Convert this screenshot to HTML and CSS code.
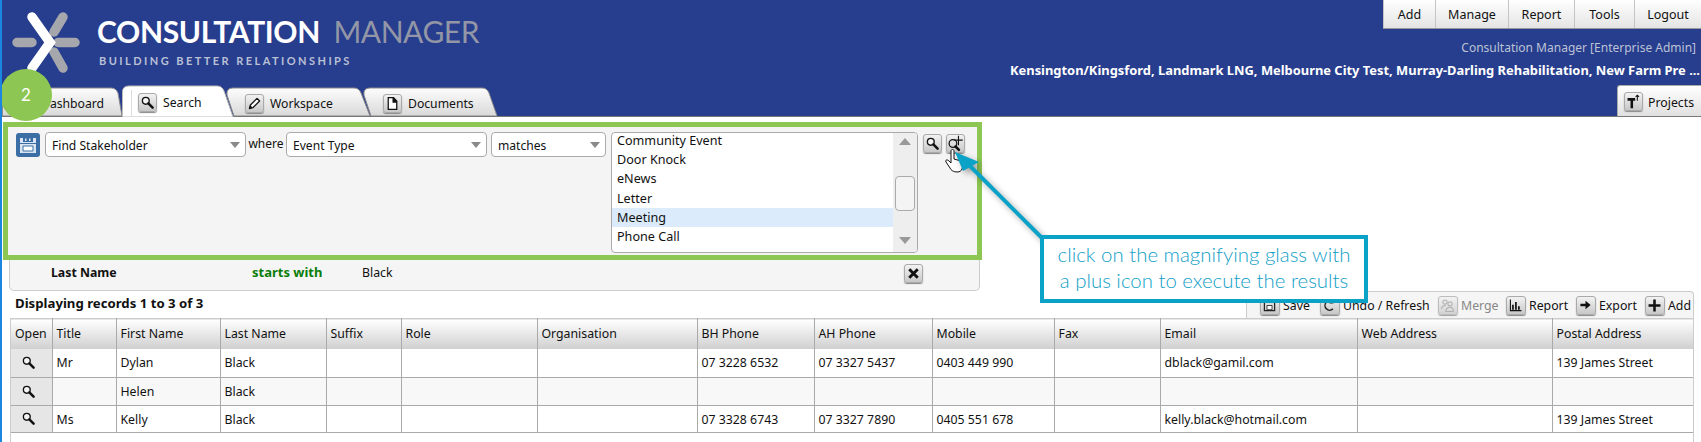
FILE: index.html
```html
<!DOCTYPE html>
<html lang="en">
<head>
<meta charset="utf-8">
<title>Consultation Manager</title>
<link rel="stylesheet" href="styles.css">
</head>
<body>
<svg class="defs" width="0" height="0" aria-hidden="true">
  <defs>
    <linearGradient id="tab-fill" x1="0" y1="0" x2="0" y2="1"><stop offset="0" stop-color="#fdfdfd"/><stop offset="1" stop-color="#d9d9d9"/></linearGradient>
  </defs>
  <symbol id="i-search" viewBox="0 0 20 20"><circle cx="8" cy="8" r="4" fill="#f4f4f4" stroke="#111" stroke-width="1.6"/><path d="M11 11l5 5" stroke="#111" stroke-width="3" stroke-linecap="round"/></symbol>
  <symbol id="i-plus" viewBox="0 0 20 20"><circle cx="7" cy="10" r="4.500" fill="none" stroke="#111" stroke-width="1.500"/><path d="M10 13.500l4 4" stroke="#111" stroke-width="3" stroke-linecap="round"/><path d="M13.500 1v11M8.500 6h10" stroke="#111" stroke-width="1.300"/></symbol>
  <symbol id="i-pencil" viewBox="0 0 20 20"><path d="M4 16l1-4 8-8 3 3-8 8z" fill="#fff" stroke="#111" stroke-width="1.500" stroke-linejoin="round"/><path d="M4 16l1-4 3 3z" fill="#111"/></symbol>
  <symbol id="i-doc" viewBox="0 0 20 20"><path d="M5 3h6l4 4v10H5z" fill="#fff" stroke="#111" stroke-width="1.500"/><path d="M10 3h2l3 4v2H10z" fill="#111"/></symbol>
  <symbol id="i-project" viewBox="0 0 20 20"><path d="M3 6h9v3H9.500v9H6.500V9H3z" fill="#111"/><path d="M14.500 9V2.500M12.500 4.500l2-2 2 2" stroke="#111" stroke-width="1.200" fill="none"/></symbol>
  <symbol id="i-save" viewBox="0 0 20 20"><path d="M4 4h12v12H4z" fill="#ddd" stroke="#222" stroke-width="1.500"/><path d="M7 10h6v5H7z" fill="#fff" stroke="#222"/></symbol>
  <symbol id="i-undo" viewBox="0 0 20 20"><path d="M14 6a5.500 5.500 0 1 0 0 8" fill="none" stroke="#222" stroke-width="1.800"/><path d="M14 3v4h-4" fill="none" stroke="#222" stroke-width="1.200"/></symbol>
  <symbol id="i-merge" viewBox="0 0 20 20"><circle cx="7" cy="6" r="2.500" fill="none" stroke="#999" stroke-width="1.200"/><circle cx="13" cy="8" r="2.500" fill="none" stroke="#999" stroke-width="1.200"/><path d="M3 14c0-3 3-4 5-4M8 17c0-3 2-5 5-5s4 2 4 5z" fill="none" stroke="#999" stroke-width="1.200"/></symbol>
  <symbol id="i-report" viewBox="0 0 20 20"><path d="M4 3v13h13" fill="none" stroke="#111" stroke-width="1.300"/><path d="M6 9h2v6H6zM9.500 6h2v9h-2zM13 11h2v4h-2z" fill="#111"/></symbol>
  <symbol id="i-export" viewBox="0 0 20 20"><path d="M4 8h6V4.500l6 5-6 5V11H4z" fill="#111"/></symbol>
  <symbol id="i-add" viewBox="0 0 20 20"><path d="M8.500 3h3v5.500H17v3h-5.500V17h-3v-5.500H3v-3h5.500z" fill="#111"/></symbol>
  <symbol id="i-close" viewBox="0 0 20 20"><path d="M5 5l10 10M15 5L5 15" stroke="#111" stroke-width="3.400"/></symbol>
  <symbol id="i-floppy" viewBox="0 0 24 24"><rect width="24" height="24" rx="3" fill="#3b6ea5"/><path d="M4 5h16v15H4z" fill="#d8e4f0"/><path d="M7 5h10v4H7z" fill="#3b6ea5"/><path d="M9 5.500h1.500V8H9zM13 5.500h1.500V8H13z" fill="#d8e4f0"/><path d="M4 10.500h16" stroke="#3b6ea5"/><path d="M7 13h10v5H7z" fill="#fff" stroke="#3b6ea5"/></symbol>
</svg>

<header class="top">
  <div class="brand-col">
    <div class="brand">
      <svg class="logo" viewBox="0 0 84 84" aria-hidden="true">
        <g fill="none" stroke-linecap="round" stroke-width="9.500">
          <path class="logo-grey" d="M17 42.500h15M58 42.500h17M63 17L54 32M54 52l9 16"/>
          <path class="logo-white" d="M32 17l18 25.500L32 68"/>
        </g>
      </svg>
      <div class="brand-text">
        <div class="brand-name"><b>CONSULTATION</b> <span>MANAGER</span></div>
        <div class="brand-tag">BUILDING BETTER RELATIONSHIPS</div>
      </div>
    </div>
    <nav class="tabs">
      <a class="tab tab-dash">
        <svg class="tab-bg" width="120" height="29" viewBox="0 0 120 29"><path class="tab-shape" d="M.5 29V7Q.5 1 7 1H109Q114 1 116 6L120 29z"/></svg>
        <span class="tab-label">Dashboard</span>
      </a>
      <a class="tab tab-search">
        <svg class="tab-bg" width="112" height="32" viewBox="0 0 112 32"><path class="tab-shape tab-active" d="M.5 32V7Q.5 1 7 1H95Q100 1 102 6L111 32z"/><path class="tab-rule" d="M9.500 5V32"/></svg>
        <span class="icon-btn"><svg><use href="#i-search"/></svg></span>
        <span class="tab-label">Search</span>
      </a>
      <a class="tab tab-work">
        <svg class="tab-bg" width="146" height="29" viewBox="0 0 146 29"><path class="tab-shape" d="M9 29L2 8Q1 1 8 1H129Q134 1 136 6L145 29z"/></svg>
        <span class="icon-btn"><svg><use href="#i-pencil"/></svg></span>
        <span class="tab-label">Workspace</span>
      </a>
      <a class="tab tab-docs">
        <svg class="tab-bg" width="136" height="29" viewBox="0 0 136 29"><path class="tab-shape" d="M9 29L2 8Q1 1 8 1H120Q125 1 127 6L135 29z"/></svg>
        <span class="icon-btn"><svg><use href="#i-doc"/></svg></span>
        <span class="tab-label">Documents</span>
      </a>
    </nav>
  </div>
  <div class="user-col">
    <nav class="menu">
      <a class="menu-item">Add</a>
      <a class="menu-item">Manage</a>
      <a class="menu-item">Report</a>
      <a class="menu-item">Tools</a>
      <a class="menu-item">Logout</a>
    </nav>
    <div class="role">Consultation Manager [Enterprise Admin]</div>
    <div class="projects-list">Kensington/Kingsford, Landmark LNG, Melbourne City Test, Murray-Darling Rehabilitation, New Farm Pre ...</div>
    <a class="projects-btn"><span class="icon-btn"><svg><use href="#i-project"/></svg></span><span class="projects-label">Projects</span></a>
  </div>
</header>

<main class="content">
  <section class="query">
    <div class="query-inner">
      <svg class="floppy"><use href="#i-floppy"/></svg>
      <div class="select sel-find">Find Stakeholder</div>
      <span class="where">where</span>
      <div class="select sel-field">Event Type</div>
      <div class="select sel-op">matches</div>
      <div class="listbox">
        <ul class="options">
          <li>Community Event</li>
          <li>Door Knock</li>
          <li>eNews</li>
          <li>Letter</li>
          <li class="selected">Meeting</li>
          <li>Phone Call</li>
        </ul>
        <div class="scrollbar">
          <i class="arrow-up"></i>
          <i class="thumb"></i>
          <i class="arrow-down"></i>
        </div>
      </div>
      <span class="icon-btn"><svg><use href="#i-search"/></svg></span>
      <span class="icon-btn"><svg><use href="#i-plus"/></svg></span>
    </div>
  </section>

  <section class="criteria">
    <b class="crit-field">Last Name</b>
    <b class="crit-op">starts with</b>
    <span class="crit-value">Black</span>
    <span class="icon-btn crit-close"><svg><use href="#i-close"/></svg></span>
  </section>

  <div class="results-bar">
    <b class="records">Displaying records 1 to 3 of 3</b>
    <div class="toolbar">
      <a class="tool tool-save"><span class="icon-btn"><svg><use href="#i-save"/></svg></span>Save</a>
      <a class="tool tool-undo"><span class="icon-btn"><svg><use href="#i-undo"/></svg></span>Undo / Refresh</a>
      <a class="tool tool-merge is-disabled"><span class="icon-btn"><svg><use href="#i-merge"/></svg></span>Merge</a>
      <a class="tool tool-report"><span class="icon-btn"><svg><use href="#i-report"/></svg></span>Report</a>
      <a class="tool tool-export"><span class="icon-btn"><svg><use href="#i-export"/></svg></span>Export</a>
      <a class="tool tool-add"><span class="icon-btn"><svg><use href="#i-add"/></svg></span>Add</a>
    </div>
  </div>

  <div class="grid-wrap">
    <table class="grid">
      <colgroup>
        <col class="c-open"><col class="c-title"><col class="c-first"><col class="c-last"><col class="c-suffix"><col class="c-role"><col class="c-org"><col class="c-bh"><col class="c-ah"><col class="c-mobile"><col class="c-fax"><col class="c-email"><col class="c-web"><col class="c-postal">
      </colgroup>
      <thead>
        <tr><th>Open</th><th>Title</th><th>First Name</th><th>Last Name</th><th>Suffix</th><th>Role</th><th>Organisation</th><th>BH Phone</th><th>AH Phone</th><th>Mobile</th><th>Fax</th><th>Email</th><th>Web Address</th><th>Postal Address</th></tr>
      </thead>
      <tbody>
        <tr class="row-first"><td class="open"><svg><use href="#i-search"/></svg></td><td>Mr</td><td>Dylan</td><td>Black</td><td></td><td></td><td></td><td>07 3228 6532</td><td>07 3327 5437</td><td>0403 449 990</td><td></td><td>dblack@gamil.com</td><td></td><td>139 James Street</td></tr>
        <tr class="alt"><td class="open"><svg><use href="#i-search"/></svg></td><td></td><td>Helen</td><td>Black</td><td></td><td></td><td></td><td></td><td></td><td></td><td></td><td></td><td></td><td></td></tr>
        <tr class="row-last"><td class="open"><svg><use href="#i-search"/></svg></td><td>Ms</td><td>Kelly</td><td>Black</td><td></td><td></td><td></td><td>07 3328 6743</td><td>07 3327 7890</td><td>0405 551 678</td><td></td><td>kelly.black@hotmail.com</td><td></td><td>139 James Street</td></tr>
      </tbody>
    </table>
  </div>
</main>

<div class="step-badge">2</div>

<svg class="pointer" width="110" height="100" viewBox="0 0 110 100" aria-hidden="true">
  <path class="hand" d="M11 6c0-2 3-2 3 0v8l7 2c2 1 2 3 2 5l-1 3c-1 2-2 3-5 3-4 0-6-2-7-4l-4-6c-1-2 1-3 3-1l2 2z"/>
  <g class="arrow-shadow">
    <path class="arrow-head" d="M15 7l24 10-16 9z"/>
    <path class="arrow-line" d="M28 19l76 76"/>
  </g>
</svg>
<aside class="callout">click on the magnifying glass with<br>a plus icon to execute the results</aside>
</body>
</html>
```

FILE: styles.css
```css
* { box-sizing: border-box; }
html, body { margin: 0; height: 442px; overflow: hidden; }
body {
  position: relative;
  background: #fff;
  border-left: 2px solid #1a86e0;
  font: 12.3px "Noto Sans", "Liberation Sans", sans-serif;
  color: #111;
}
.defs { position: absolute; }
b { font-weight: 700; }

/* header */
.top {
  display: flex;
  justify-content: space-between;
  height: 117px;
  background: #273d8d;
  border-bottom: 1px solid #777;
}
.brand-col { display: flex; flex-direction: column; }
.brand { display: flex; height: 88px; }
.logo { width: 84px; height: 84px; margin-left: -2px; flex: none; }
.logo-grey { stroke: #a5a7ad; }
.logo-white { stroke: #fff; }
.brand-text { margin-left: 13px; padding-top: 13px; }
.brand-name {
  font: 400 30px/36px Lato, sans-serif;
  letter-spacing: -.35px;
  white-space: nowrap;
}
.brand-name b { color: #fff; font-weight: 700; }
.brand-name span { color: #9296a6; font-weight: 400; margin-left: 6px; letter-spacing: -.45px; }
.brand-tag {
  font: 700 11px/14px Lato, sans-serif;
  letter-spacing: 2.45px;
  color: #b9c0d6;
  margin: 5px 0 0 2px;
  white-space: nowrap;
}

.tabs { display: flex; align-items: flex-end; height: 29px; }
.tab {
  position: relative;
  display: flex;
  align-items: center;
  height: 29px;
  padding-top: 3px;
  font-size: 12.2px;
  color: #111;
}
.tab > * { position: relative; }
.tab > .tab-bg { position: absolute; left: 0; top: 0; }
.tab-shape { fill: url(#tab-fill); stroke: #8a8a8a; }
.tab-active { fill: #fff; stroke: #bbb; }
.tab-rule { stroke: #ddd; fill: none; }
.tab-dash { width: 120px; padding-left: 39px; }
.tab-search { width: 112px; height: 32px; margin-bottom: -1px; padding-left: 16px; z-index: 2; }
.tab-work { width: 146px; margin-left: -9px; padding-left: 20px; z-index: 1; }
.tab-docs { width: 136px; margin-left: -9px; padding-left: 21px; }
.tab-search .tab-label, .tab-work .tab-label, .tab-docs .tab-label { margin-left: 6px; }

.user-col { display: flex; flex-direction: column; align-items: flex-end; width: 900px; }
.menu {
  display: grid;
  grid-template-columns: 52px 73px 66px 60px 67px;
  height: 29px;
  background: linear-gradient(#fff, #e4e4e4);
  border-bottom: 1px solid #999;
}
.menu-item {
  display: flex;
  align-items: center;
  justify-content: center;
  border-left: 1px solid #c4c4c4;
  font-size: 12.5px;
}
.role { margin: 10px 5px 0 0; line-height: 18px; font-size: 12px; color: #bcc3d6; }
.projects-list { margin: 4px 1px 0 0; line-height: 18px; font-size: 12.9px; color: #fff; font-weight: 700; white-space: nowrap; }
.projects-btn {
  display: flex;
  align-items: center;
  height: 31px;
  width: 84px;
  margin-top: auto;
  padding-left: 6px;
  background: linear-gradient(#fff, #e0e0e0);
  border: solid #aaa;
  border-width: 1px 0 0 1px;
  border-radius: 3px 0 0 0;
}
.projects-label { margin: 2px 0 0 5px; }

/* icon buttons */
.icon-btn {
  display: inline-flex;
  flex: none;
  width: 19px;
  height: 19px;
  background: linear-gradient(#f2f2f2, #c8c8c8);
  border: 1px solid #aaa;
  border-radius: 3px;
  box-shadow: 0 1px 1px #888;
}
.icon-btn svg { width: 17px; height: 17px; }

/* search builder */
.content { display: block; padding-left: 1px; }
.query {
  width: 979px;
  height: 138px;
  margin-top: 5px;
  border: 5px solid #8dc653;
  background: #f4f4f4;
}
.query-inner { display: flex; align-items: flex-start; height: 100%; padding: 0 0 0 8px; }
.floppy { width: 24px; height: 24px; margin: 6px 5px 0 0; flex: none; }
.select {
  position: relative;
  height: 25px;
  margin-top: 5px;
  padding: 1px 0 0 6px;
  background: #fff;
  border: 1px solid #aaa;
  border-radius: 4px;
  font-size: 12.1px;
  line-height: 23px;
}
.select::after {
  content: "";
  position: absolute;
  right: 5px;
  top: 9px;
  border: 5px solid transparent;
  border-top: 6px solid #8a8a8a;
  border-bottom: 0;
}
.sel-find { width: 201px; }
.sel-field { width: 201px; margin-right: 4px; }
.sel-op { width: 115px; margin-right: 5px; }
.where { width: 40px; margin-top: 8px; text-align: center; line-height: 18px; font-size: 12px; }
.listbox {
  display: flex;
  width: 307px;
  height: 121px;
  margin: 5px 5px 0 0;
  background: #fff;
  border: 1px solid #aaa;
  border-radius: 4px;
  overflow: hidden;
}
.options { flex: 1; margin: -2px 0 0; padding: 0; list-style: none; font-size: 12.6px; line-height: 19.200px; }
.selected { background: #dbebfb; }
.options li { padding-left: 5px; }
.scrollbar { position: relative; width: 24px; background: #eee; }
.arrow-up, .arrow-down { position: absolute; left: 6px; border: 6px solid transparent; }
.arrow-up { top: 5px; border-bottom: 7px solid #999; border-top: 0; }
.arrow-down { bottom: 8px; border-top: 7px solid #999; border-bottom: 0; }
.thumb { position: absolute; left: 2px; top: 43px; width: 20px; height: 35px; background: #f4f4f4; border: 1px solid #aaa; border-radius: 4px; }
.query-inner > .icon-btn { margin: 7px 4px 0 0; }

.criteria {
  display: flex;
  align-items: center;
  width: 971px;
  height: 31px;
  margin-left: 6px;
  padding: 0 0 6px 41px;
  background: #f5f5f5;
  border: 1px solid #ccc;
  border-top: 0;
  border-radius: 0 0 5px 5px;
}
.crit-field { width: 201px; }
.crit-op { width: 110px; color: #0a7d0a; font-size: 13px; }
.crit-value { width: 542px; }
.crit-close { margin-top: 2px; }

.results-bar { display: flex; justify-content: space-between; align-items: flex-end; height: 27px; }
.records { padding: 0 0 5px 12px; font-size: 13.200px; line-height: 20px; }
.toolbar {
  display: flex;
  align-items: center;
  width: 448px;
  height: 27px;
  margin-right: 7px;
  padding-left: 13px;
  background: #f5f5f5;
  border: 1px solid #ccc;
  border-bottom: 0;
  border-radius: 4px 4px 0 0;
}
.tool { display: flex; align-items: center; white-space: nowrap; }
.tool .icon-btn { margin-right: 3px; width: 20px; }
.tool-save { width: 60px; }
.tool-undo { width: 118px; }
.tool-merge { width: 68px; }
.tool-report { width: 70px; }
.tool-export { width: 69px; }
.is-disabled { color: #888; }
.is-disabled .icon-btn { opacity: .75; }

/* grid */
.grid-wrap {
  width: 1684px;
  height: 125px;
  margin-left: 7px;
  border: solid #ccc;
  border-width: 0 1px;
}
.grid { width: 100%; table-layout: fixed; border-collapse: collapse; }
.grid th, .grid td {
  padding: 0 0 0 4px;
  border: 1px solid #aaa;
  border-width: 0 1px 1px 0;
  text-align: left;
  font-weight: 400;
  white-space: nowrap;
  overflow: hidden;
}
.grid th {
  height: 30px;
  background: linear-gradient(#fff, #cfcfcf);
  border-top: 1px solid #ccc;
  border-bottom: 0;
}
.grid td { height: 28px; }
.row-first td { height: 29px; }
.row-last td { height: 27px; }
.grid tr > :last-child { border-right: 0; }
.alt td { background: #f8f8f8; }
.grid td.open { background: #e6e6e6; padding: 3px 0 0 9px; }
.open svg { width: 17px; height: 17px; }
.c-open { width: 41px; }
.c-title { width: 64px; }
.c-first { width: 104px; }
.c-last { width: 106px; }
.c-suffix { width: 75px; }
.c-role { width: 136px; }
.c-org { width: 160px; }
.c-bh { width: 117px; }
.c-ah { width: 118px; }
.c-mobile { width: 122px; }
.c-fax { width: 106px; }
.c-email { width: 197px; }
.c-web { width: 195px; }
.c-postal { width: 141px; }

/* overlays */
.step-badge {
  position: absolute;
  left: -2px;
  top: 69px;
  width: 52px;
  height: 52px;
  border-radius: 50%;
  background: #8dc653;
  color: #fff;
  font: 400 17px/52px Lato, sans-serif;
  text-align: center;
}
.pointer { position: absolute; left: 938px; top: 145px; overflow: visible; }
.hand { fill: #fff; stroke: #111; stroke-width: 1; }
.arrow-shadow { filter: drop-shadow(3px 3px 3px rgba(0,0,0,.35)); }
.arrow-head { fill: #0aa2c6; }
.arrow-line { stroke: #0aa2c6; stroke-width: 4; fill: none; }
.callout {
  position: absolute;
  left: 1038px;
  top: 235px;
  width: 328px;
  height: 68px;
  border: 4px solid #0aa2c6;
  background: #fff;
  color: #12a0c8;
  font: 300 20.4px/26px Lato, sans-serif;
  text-align: center;
  padding-top: 2px;
  white-space: nowrap;
}
```
